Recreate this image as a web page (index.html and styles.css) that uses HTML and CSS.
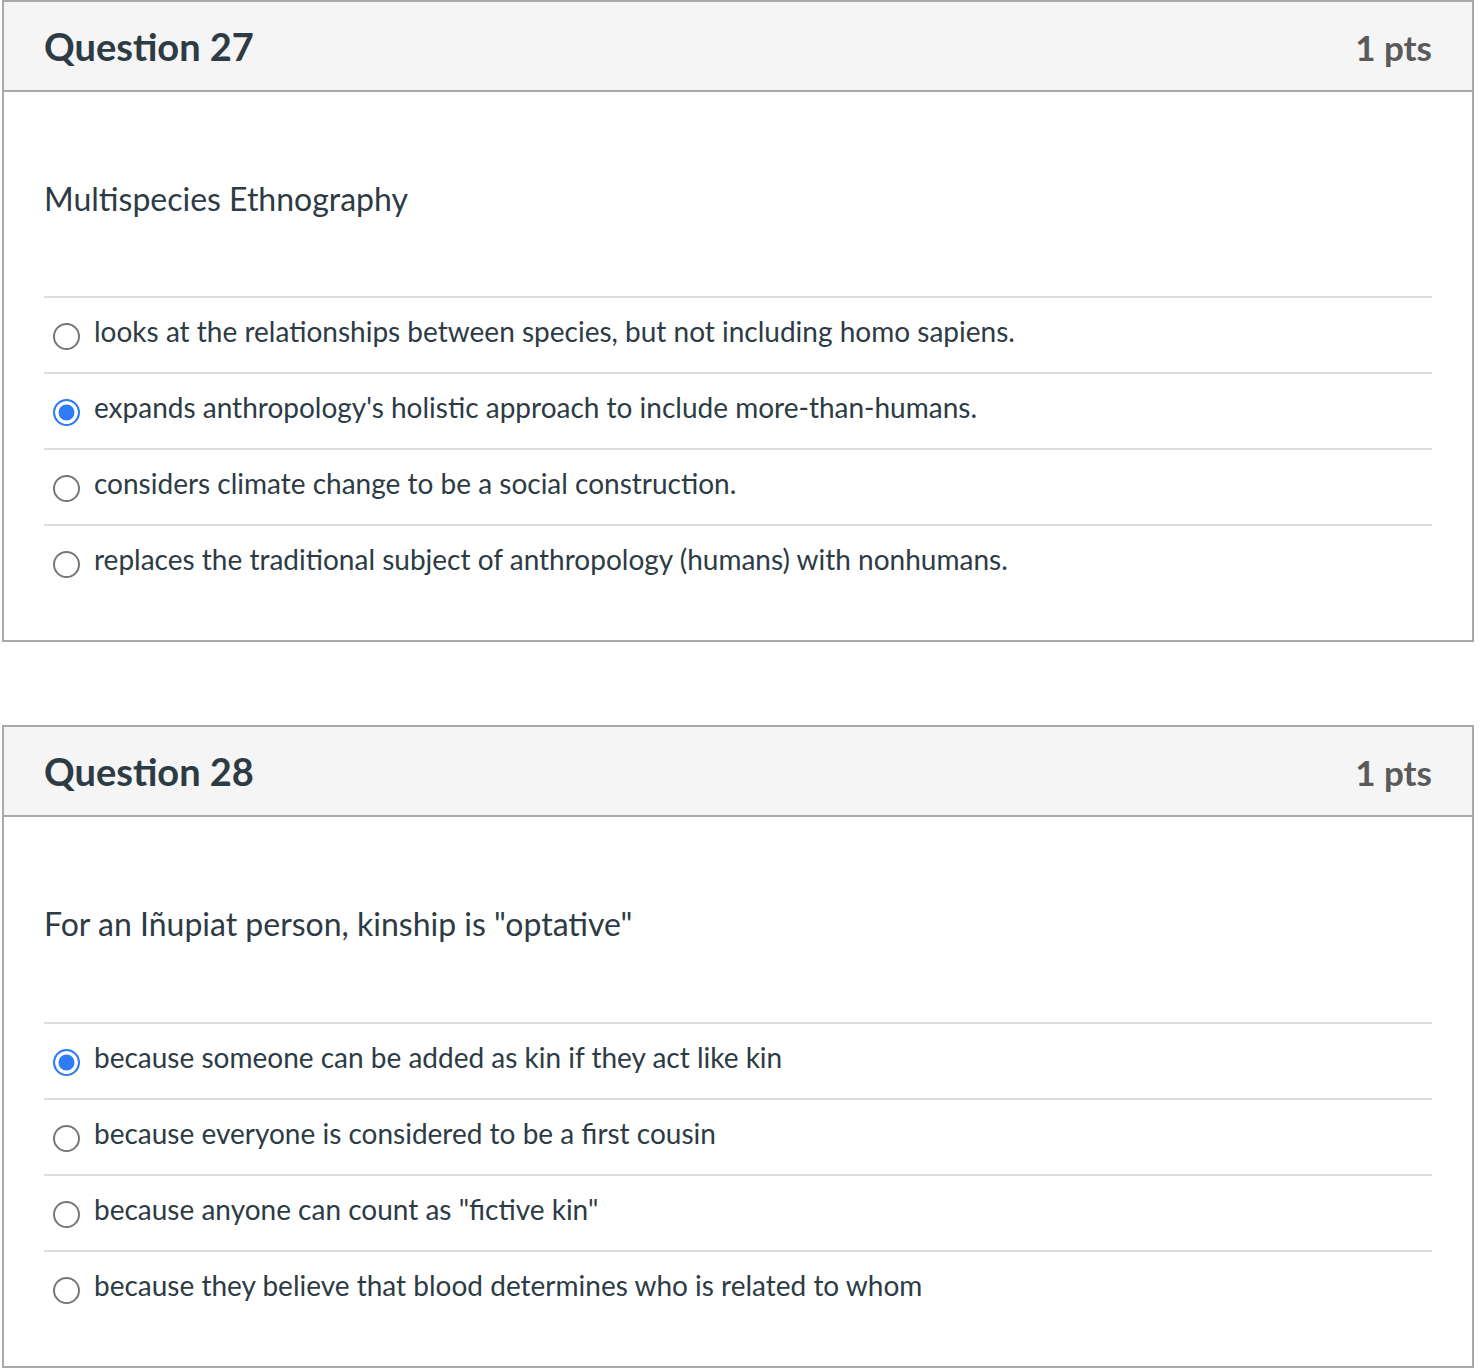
FILE: index.html
```html
<!DOCTYPE html>
<html>
<head>
<meta charset="utf-8">
<link rel="stylesheet" href="styles.css">
</head>
<body>
<div class="question">
  <div class="q-header">
    <h2 class="q-title">Question 27</h2>
    <span class="q-pts">1 pts</span>
  </div>
  <div class="q-body">
    <p class="q-text">Multispecies Ethnography</p>
    <ul class="answers">
      <li class="answer"><span class="radio"></span><span class="label">looks at the relationships between species, but not including homo sapiens.</span></li>
      <li class="answer"><span class="radio checked"></span><span class="label">expands anthropology's holistic approach to include more-than-humans.</span></li>
      <li class="answer"><span class="radio"></span><span class="label">considers climate change to be a social construction.</span></li>
      <li class="answer"><span class="radio"></span><span class="label">replaces the traditional subject of anthropology (humans) with nonhumans.</span></li>
    </ul>
  </div>
</div>
<div class="question">
  <div class="q-header">
    <h2 class="q-title">Question 28</h2>
    <span class="q-pts">1 pts</span>
  </div>
  <div class="q-body">
    <p class="q-text">For an Iñupiat person, kinship is "optative"</p>
    <ul class="answers">
      <li class="answer"><span class="radio checked"></span><span class="label">because someone can be added as kin if they act like kin</span></li>
      <li class="answer"><span class="radio"></span><span class="label">because everyone is considered to be a first cousin</span></li>
      <li class="answer"><span class="radio"></span><span class="label">because anyone can count as "fictive kin"</span></li>
      <li class="answer"><span class="radio"></span><span class="label">because they believe that blood determines who is related to whom</span></li>
    </ul>
  </div>
</div>
</body>
</html>
```

FILE: styles.css
```css
* { box-sizing: border-box; }
html, body { margin: 0; padding: 0; background: #fff; }
body {
  font-family: Lato, "Open Sans", "Liberation Sans", sans-serif;
  color: #2d3b45;
}
.question {
  width: 1472px;
  margin-left: 2px;
  border: 2px solid #a9a9a9;
  background: #fff;
}
.question + .question { margin-top: 83px; }
.q-header {
  display: flex;
  justify-content: space-between;
  align-items: flex-start;
  height: 90px;
  padding: 0 40px;
  background: #f5f5f5;
  border-bottom: 2px solid #a9a9a9;
}
.q-title {
  margin: 22px 0 0;
  font-size: 38px;
  line-height: 1.2;
  font-weight: 700;
  color: #2d3b45;
}
.q-pts {
  margin-top: 24px;
  font-size: 35px;
  line-height: 1.2;
  font-weight: 700;
  color: #5a5a5a;
}
.q-body { padding: 0 40px 40px; }
.q-text {
  margin: 0;
  padding: 88px 0 78px;
  font-size: 32px;
  line-height: 1.2;
}
.answers { list-style: none; margin: 0; padding: 0; }
.answer {
  display: flex;
  align-items: flex-start;
  height: 76px;
  padding-top: 17px;
  border-top: 2px solid #dddddd;
}
.radio {
  flex: none;
  width: 27px;
  height: 27px;
  margin: 8px 14px 0 9px;
  border: 2px solid #777;
  border-radius: 50%;
  background: #fff;
}
.radio.checked {
  border: 2.5px solid #2f7cf6;
  background: #2f7cf6;
  box-shadow: inset 0 0 0 3.5px #fff;
}
.label {
  font-size: 28px;
  line-height: 1.2;
}
```
